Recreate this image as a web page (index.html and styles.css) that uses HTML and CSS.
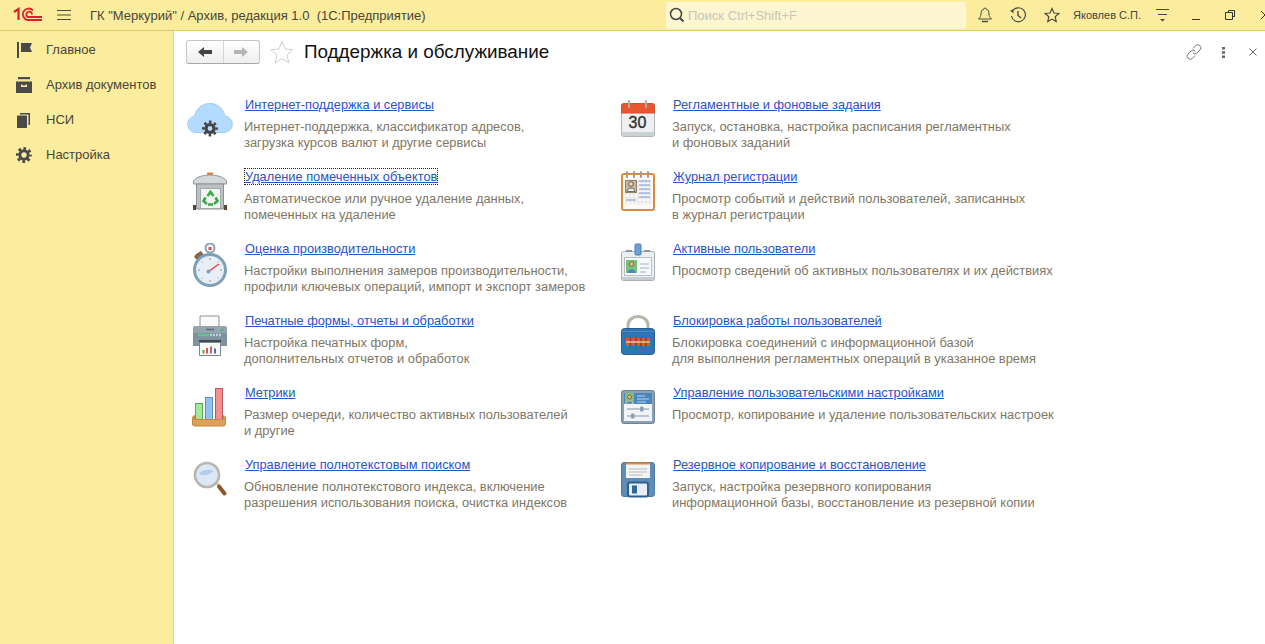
FILE: index.html
```html
<!DOCTYPE html>
<html lang="ru">
<head>
<meta charset="utf-8">
<title>Поддержка и обслуживание</title>
<link rel="stylesheet" href="styles.css">
</head>
<body>
<div class="app">
  <header class="topbar">
    <svg class="logo" width="30" height="16" viewBox="0 0 30 16"><path d="M1 5l4.500-3V13" fill="none" stroke="#d8232a" stroke-width="2.200"/><path d="M20 3.500A5.800 5.800 0 1 0 14.500 13H29" fill="none" stroke="#d8232a" stroke-width="1.800"/><path d="M19 7.500A2.800 2.800 0 1 0 15 10H29" fill="none" stroke="#d8232a" stroke-width="1.800"/></svg>
    <svg class="burger" width="16" height="12" viewBox="0 0 16 12"><path d="M1 1.500h14M1 6h14M1 10.500h14" stroke="#4a4a40" stroke-width="1"/></svg>
    <div class="apptitle">ГК "Меркурий" / Архив, редакция 1.0&nbsp; (1С:Предприятие)</div>
    <div class="search">
      <svg width="18" height="18" viewBox="0 0 18 18"><circle cx="8" cy="8" r="5.500" fill="none" stroke="#444" stroke-width="1.500"/><path d="M12 12l3.500 3.500" stroke="#444" stroke-width="2"/></svg>
      <span>Поиск Ctrl+Shift+F</span>
    </div>
    <div class="tools">
      <svg class="t-bell" width="16" height="18" viewBox="0 0 16 18"><path d="M8 2a1 1 0 0 1 1 1c2.500.6 3 3 3 5 0 2 .6 3 2.500 5h-13C3.400 11 4 10 4 8c0-2 .5-4.400 3-5a1 1 0 0 1 1-1z" fill="none" stroke="#4a4a40"/><path d="M5 15.500h6" stroke="#4a4a40" stroke-width="1.500"/></svg>
      <svg class="t-hist" width="18" height="18" viewBox="0 0 18 18"><path d="M3.500 5A7 7 0 1 1 2.500 10" fill="none" stroke="#4a4a40" stroke-width="1.200"/><path d="M1 4.500l3.500-1v4z" fill="#4a4a40"/><path d="M9 5v4.500l3 2.500" fill="none" stroke="#4a4a40" stroke-width="1.400"/></svg>
      <svg class="t-star" width="16" height="16" viewBox="0 0 16 16"><path d="M8 1.500l2 4.500 4.800.5-3.600 3.200 1 4.800L8 12.100 3.800 14.500l1-4.800L1.200 6.500 6 6z" fill="none" stroke="#4a4a40" stroke-width="1.200"/></svg>
      <span class="user">Яковлев С.П.</span>
      <svg class="t-list" width="15" height="14" viewBox="0 0 15 14"><path d="M1 1.500h13M3 6.500h9" stroke="#4a4a40"/><path d="M5 11h5l-2.500 2.500z" fill="#4a4a40"/></svg>
      <svg class="t-min" width="10" height="12" viewBox="0 0 10 12"><path d="M1 10.500h8" stroke="#333"/></svg>
      <svg class="t-rest" width="10" height="10" viewBox="0 0 10 10"><path d="M3.500 2.500v-2h6v6h-2M.5 2.500h7v7h-7z" fill="none" stroke="#333"/></svg>
      <svg class="t-close" width="10" height="10" viewBox="0 0 10 10"><path d="M1 1l8 8M9 1l-8 8" stroke="#333"/></svg>
    </div>
  </header>
  <div class="body">
    <nav class="sidebar">
      <a class="navitem"><svg width="16" height="16" viewBox="0 0 16 16"><path d="M1 0h2v16H1z" fill="#4a4a4a"/><path d="M5 1h11l-2 4.500 2 4.500H5z" fill="#4a4a4a"/></svg><span>Главное</span></a>
      <a class="navitem"><svg width="16" height="16" viewBox="0 0 16 16"><path d="M2 0h12v2.200H2z" fill="#4a4a4a"/><path fill-rule="evenodd" d="M0 4.500h16V16H0zM5 7.500V10h6V7.500H9.500v1h-3v-1z" fill="#4a4a4a"/></svg><span>Архив документов</span></a>
      <a class="navitem"><svg width="16" height="16" viewBox="0 0 16 16"><path d="M1 3.500h10V16H1z" fill="#4a4a4a"/><path d="M12.500 2.500H4V1h10v12h-1.500z" fill="#4a4a4a"/></svg><span>НСИ</span></a>
      <a class="navitem"><svg width="16" height="16" viewBox="0 0 16 16"><circle cx="8" cy="8" r="4.200" fill="none" stroke="#4a4a4a" stroke-width="3"/><circle cx="8" cy="8" r="6.500" fill="none" stroke="#4a4a4a" stroke-width="3" stroke-dasharray="2.550 2.555" stroke-dashoffset="1.270"/></svg><span>Настройка</span></a>
    </nav>
    <main class="main">
      <div class="titlebar">
        <div class="navbtns">
          <button class="navbtn"><svg width="16" height="12" viewBox="0 0 16 12"><path d="M1 6l6-5v3h8v4H7v3z" fill="#444"/></svg></button>
          <button class="navbtn"><svg width="16" height="12" viewBox="0 0 16 12"><path d="M15 6L9 1v3H1v4h8v3z" fill="#b5b5b5"/></svg></button>
        </div>
        <svg class="favstar" width="24" height="24" viewBox="0 0 24 24"><path d="M12 1.500l3 7.500 8 .7-6 5.300 1.800 7.800L12 18.600l-6.800 4.200L7 15 1 9.700 9 9z" fill="#fff" stroke="#cfcfcf"/></svg>
        <h1 class="title">Поддержка и обслуживание</h1>
        <div class="winact">
          <svg width="16" height="16" viewBox="0 0 16 16"><path d="M7 4.500l2.500-2.800a3 3 0 0 1 4.500 4.300L11 9a3 3 0 0 1-4.200 0M9 11.500l-2.500 2.800A3 3 0 0 1 2 10l3-3a3 3 0 0 1 4.200 0" fill="none" stroke="#777"/></svg>
          <svg width="3" height="11" viewBox="0 0 3 11"><path d="M0 0h3v2.500H0zM0 4.200h3v2.500H0zM0 8.500h3V11H0z" fill="#666"/></svg>
          <svg class="x" width="8" height="8" viewBox="0 0 8 8"><path d="M.5.500l7 7M7.500.500l-7 7" stroke="#666"/></svg>
        </div>
      </div>
      <section class="grid">
        <article class="card">
          <svg class="ico" width="48" height="46" viewBox="0 0 48 46"><path d="M9 33.500a8.200 8.200 0 0 1-1.500-16.300 15.500 15.500 0 0 1 30.500-.2A8.300 8.300 0 0 1 38 33.500z" fill="#b3daff" stroke="#a3cdf2"/><circle cx="23" cy="29.500" r="4" fill="none" stroke="#444" stroke-width="3.200"/><circle cx="23" cy="29.500" r="6.600" fill="none" stroke="#444" stroke-width="2.600" stroke-dasharray="2.590 2.593" stroke-dashoffset="1.300"/></svg>
          <div class="text"><a class="link">Интернет-поддержка и сервисы</a><p>Интернет-поддержка, классификатор адресов,<br>загрузка курсов валют и другие сервисы</p></div>
        </article>
        <article class="card">
          <svg class="ico" width="48" height="46" viewBox="0 0 48 46"><rect x="6.500" y="4.500" width="33" height="33" rx="2" fill="#eef0f2" stroke="#b0b8bc"/><path d="M6.500 14V7a2.500 2.500 0 0 1 2.500-2.500h28A2.500 2.500 0 0 1 39.500 7v7z" fill="#e8572f" stroke="#d0502c"/><path d="M7 33h32v4H7z" fill="#c9d1d5"/><path d="M14 2v6M31 2v6" stroke="#b3aaa5" stroke-width="2.200" stroke-linecap="round"/><text x="22.500" y="29" class="cal">30</text></svg>
          <div class="text"><a class="link">Регламентные и фоновые задания</a><p>Запуск, остановка, настройка расписания регламентных<br>и фоновых заданий</p></div>
        </article>
        <article class="card">
          <svg class="ico" width="48" height="46" viewBox="0 0 48 46"><path d="M20 4V1.500h6V4z" fill="#d9843f"/><path d="M6.500 13V10C9 6 16 4 23 4s14 2 16.500 6v3z" fill="#d3d8da" stroke="#8f9699"/><path d="M9.500 13h27v25h-27z" fill="#bcc1c3" stroke="#8b9194"/><rect x="13.500" y="17.500" width="20" height="20" fill="#f1f4ef" stroke="#a3aaa8"/><path d="M20.500 25l3-4 3 4M28.500 26.500l2 3.500-3.500 3M18.500 26.500l-2 3.500 3.500 3M21 33.500h5" fill="none" stroke="#38a84d" stroke-width="2.600"/><path d="M6 34h3v5H6zM37 34h3v5h-3z" fill="#5c4634"/></svg>
          <div class="text"><a class="link focused">Удаление помеченных объектов</a><p>Автоматическое или ручное удаление данных,<br>помеченных на удаление</p></div>
        </article>
        <article class="card">
          <svg class="ico" width="48" height="46" viewBox="0 0 48 46"><rect x="7" y="3" width="32" height="36" rx="2" fill="#fbfaf6" stroke="#dd8a3f" stroke-width="2"/><path d="M11 8v26M15 8v26M19 8v26M23 8v26M27 8v26M31 8v26M35 8v26M10 11h26M10 15h26M10 19h26M10 23h26M10 27h26M10 31h26" stroke="#dcdfe3" stroke-width=".8"/><rect x="10.500" y="9.500" width="11" height="12" fill="#c9b79d" stroke="#8f8270"/><circle cx="16" cy="13" r="2.300" fill="#f1d9bd" stroke="#444" stroke-width=".8"/><path d="M12 20.500c0-4.500 8-4.500 8 0z" fill="#eee" stroke="#444" stroke-width=".7"/><path d="M24 10h11M24 14h11M24 18h11M24 22h11M24 26h11M11 29h10" stroke="#7996c8"/><path d="M12 1v5M19 1v5M26 1v5M33 1v5" stroke="#9d9d9d" stroke-width="2" stroke-linecap="round"/></svg>
          <div class="text"><a class="link">Журнал регистрации</a><p>Просмотр событий и действий пользователей, записанных<br>в журнал регистрации</p></div>
        </article>
        <article class="card">
          <svg class="ico" width="48" height="46" viewBox="0 0 48 46"><circle cx="23" cy="5" r="4.500" fill="#f4f4f4" stroke="#8fa5b5" stroke-width="2"/><path d="M21.500 4h3v3h-3z" fill="#d85050"/><path d="M9 11l5-3 3 4-7 5-3-3z" fill="#8a6648"/><circle cx="23" cy="27" r="17" fill="#7f9fb5"/><circle cx="23" cy="27" r="14" fill="#e8eef6"/><path d="M23 15v2M23 37v2M11 27h2M33 27h2M14.500 18.500l1 1M31.500 18.500l-1 1M14.500 35.500l1-1M31.500 35.500l-1-1" stroke="#8796a5"/><path d="M21 29l11-8" stroke="#e0454a" stroke-width="1.500"/><circle cx="21.500" cy="28.500" r="2" fill="#7f9fb5"/></svg>
          <div class="text"><a class="link">Оценка производительности</a><p>Настройки выполнения замеров производительности,<br>профили ключевых операций, импорт и экспорт замеров</p></div>
        </article>
        <article class="card">
          <svg class="ico" width="48" height="46" viewBox="0 0 48 46"><rect x="6.500" y="8.500" width="33" height="29" rx="2" fill="#eceff2" stroke="#a7b0b6"/><path d="M7 34h32v3H7z" fill="#c5ccd1"/><path d="M11 8h6M29 8h6" stroke="#8d969c" stroke-width="2"/><rect x="20" y="1" width="6" height="11" rx="1" fill="#6f9fd8" stroke="#4d7fb8"/><rect x="9.500" y="14.500" width="27" height="18" fill="#f6f8fa" stroke="#b7c0c6"/><rect x="11" y="17" width="11" height="13" fill="#7dc07a"/><circle cx="16.500" cy="21" r="2.300" fill="#e8b98c" stroke="#6b4a2f" stroke-width=".7"/><path d="M12.500 30c0-5 8-5 8 0z" fill="#4f86c6"/><path d="M25 21h9M25 25h9M25 29h6" stroke="#9db3c6" stroke-width="1.200"/></svg>
          <div class="text"><a class="link">Активные пользователи</a><p>Просмотр сведений об активных пользователях и их действиях</p></div>
        </article>
        <article class="card">
          <svg class="ico" width="48" height="46" viewBox="0 0 48 46"><path d="M13 1h19v13H13z" fill="#fafafa" stroke="#8d9398"/><path d="M6 14a3 3 0 0 1 3-3h28a3 3 0 0 1 3 3v17H6z" fill="#7f929f"/><path d="M6 14a3 3 0 0 1 3-3h28a3 3 0 0 1 3 3v4H6z" fill="#94a5b0"/><path d="M19 14.500h8" stroke="#5c6a73" stroke-width="1.500"/><circle cx="35" cy="15" r="1.500" fill="#5aab82"/><path d="M11 20h11" stroke="#62c48f" stroke-width="2.400"/><path d="M23 20h12" stroke="#c2cdd3" stroke-width="2.400" stroke-dasharray="2 1"/><path d="M12 25h22v6H12z" fill="#3f4a52"/><path d="M12.500 27.500h21v13h-21z" fill="#fbfbfb" stroke="#7a8890"/><path d="M16.500 35v3.500" stroke="#4fa35a" stroke-width="2"/><path d="M20 33v5.500" stroke="#e05050" stroke-width="2"/><path d="M24 31.500v7" stroke="#d86060" stroke-width="2"/><path d="M28 33.500v5" stroke="#4a6bc4" stroke-width="2"/></svg>
          <div class="text"><a class="link">Печатные формы, отчеты и обработки</a><p>Настройка печатных форм,<br>дополнительных отчетов и обработок</p></div>
        </article>
        <article class="card">
          <svg class="ico" width="48" height="46" viewBox="0 0 48 46"><path d="M13 15V10A10 8.500 0 0 1 33 10v5" fill="none" stroke="#b9b4aa" stroke-width="3"/><rect x="6.500" y="13.500" width="33" height="26" rx="3" fill="#2f74b5" stroke="#24608f"/><path d="M7 16.500h32" stroke="#4a8bc8"/><rect x="11" y="23" width="24" height="8" fill="#d85a30"/><path d="M15.500 23v8M21 23v8M26 23v8M31 23v8" stroke="#6b3a28" stroke-width="1.200"/><path d="M11 27h24" stroke="#f5c08a" stroke-width="1.500"/></svg>
          <div class="text"><a class="link">Блокировка работы пользователей</a><p>Блокировка соединений с информационной базой<br>для выполнения регламентных операций в указанное время</p></div>
        </article>
        <article class="card">
          <svg class="ico" width="48" height="46" viewBox="0 0 48 46"><rect x="8.500" y="16.500" width="7" height="16" fill="#a3e89a" stroke="#5fa558"/><rect x="18.500" y="10.500" width="7" height="22" fill="#94c0f0" stroke="#5f8fc8"/><rect x="28.500" y="1.500" width="7" height="31" fill="#f59090" stroke="#b85a60"/><path d="M5.500 30l2-1.500v4h29v-4l2 1.500v7a2 2 0 0 1-2 2h-29a2 2 0 0 1-2-2z" fill="#dfa05a" stroke="#c4873f"/></svg>
          <div class="text"><a class="link">Метрики</a><p>Размер очереди, количество активных пользователей<br>и другие</p></div>
        </article>
        <article class="card">
          <svg class="ico" width="48" height="46" viewBox="0 0 48 46"><rect x="6.500" y="3.500" width="33" height="33" rx="2" fill="#8ba1b3" stroke="#6f8698"/><path d="M9 6h28v11H9z" fill="#4a86bf"/><rect x="10" y="6" width="9" height="11" fill="#86c06d"/><circle cx="14.500" cy="10" r="2" fill="#e3b58d" stroke="#4a3a2a" stroke-width=".6"/><path d="M11 17c0-4 7-4 7 0z" fill="#5b7fa5" stroke="#e8eef4" stroke-width=".5"/><path d="M22 9h8M22 12h12M22 15h9" stroke="#bcd6ec"/><path d="M9 17h28v17H9z" fill="#f2f5f8"/><path d="M12 22h22M12 29h22" stroke="#8295a5"/><rect x="25" y="19.500" width="3.500" height="5" rx="1" fill="#8ba1b3"/><rect x="16" y="26.500" width="3.500" height="5" rx="1" fill="#8ba1b3"/></svg>
          <div class="text"><a class="link">Управление пользовательскими настройками</a><p>Просмотр, копирование и удаление пользовательских настроек</p></div>
        </article>
        <article class="card">
          <svg class="ico" width="48" height="46" viewBox="0 0 48 46"><circle cx="20" cy="16" r="12" fill="#dce8f6" stroke="#b9b6ae" stroke-width="2.600"/><path d="M12 15c3-5 10-5 15-3-4 3-10 6-15 3z" fill="#b5cdef"/><path d="M28.500 25l2.500-1 2 1-1.500 2.500z" fill="#c8c0b4"/><path d="M32 27.500l5.500 7" stroke="#8a5a2c" stroke-width="4" stroke-linecap="round"/></svg>
          <div class="text"><a class="link">Управление полнотекстовым поиском</a><p>Обновление полнотекстового индекса, включение<br>разрешения использования поиска, очистка индексов</p></div>
        </article>
        <article class="card">
          <svg class="ico" width="48" height="46" viewBox="0 0 48 46"><path d="M9 3.500h28a2.500 2.500 0 0 1 2.500 2.500v29a2.500 2.500 0 0 1-2.500 2.500H9A2.500 2.500 0 0 1 6.500 35V6A2.500 2.500 0 0 1 9 3.500z" fill="#5f8db8" stroke="#4c7aa5"/><rect x="11" y="4" width="24" height="15" fill="#f3f4f4"/><path d="M11 4.500h24" stroke="#e58a3c" stroke-width="2"/><path d="M14 10h18M14 13h18M14 16h14" stroke="#b6bcc0"/><rect x="13" y="23.500" width="20" height="14" rx="2" fill="#e7eef4" stroke="#2f5f8a" stroke-width="2"/><rect x="17" y="26.500" width="5" height="8" fill="#2f6a9a"/></svg>
          <div class="text"><a class="link">Резервное копирование и восстановление</a><p>Запуск, настройка резервного копирования<br>информационной базы, восстановление из резервной копии</p></div>
        </article>
      </section>
    </main>
  </div>
</div>
</body>
</html>
```

FILE: styles.css
```css
* { box-sizing: border-box; }
html, body { margin: 0; height: 100%; }
body { font-family: "Liberation Sans", Arial, sans-serif; font-size: 12.800px; color: #333; background: #fff; overflow: hidden; }
.app { height: 644px; display: flex; flex-direction: column; }
.topbar { height: 31px; flex: none; display: flex; align-items: center; background: #fbec9e; border-bottom: 1px solid #dcc96b; padding-left: 13px; overflow: hidden; }
.topbar svg { flex: none; }
.logo { margin-right: 13px; }
.burger { margin-right: 18px; }
.apptitle { width: 576px; flex: none; font-size: 13px; color: #4a4638; }
.search { width: 300px; height: 27px; flex: none; background: #fdf6d0; border-radius: 2px; display: flex; align-items: center; padding-left: 2px; gap: 2px; font-size: 13px; color: #c9c6b8; }
.tools { flex: none; height: 30px; display: flex; align-items: center; }
.t-bell { margin-left: 11px; }
.t-hist { margin-left: 16px; }
.t-star { margin-left: 17px; }
.user { margin-left: 13px; font-size: 11px; color: #444; white-space: nowrap; }
.t-list { margin-left: 14px; }
.t-min { margin-left: 21px; }
.t-rest { margin-left: 24px; }
.t-close { margin-left: 25px; }
.body { flex: 1; display: flex; min-height: 0; }
.sidebar { width: 174px; flex: none; background: #fbec9e; border-right: 1px solid #e2d27e; padding-top: 1px; }
.navitem { height: 35px; display: flex; align-items: center; padding-left: 16px; gap: 14px; font-size: 13px; color: #4a4638; }
.main { flex: 1; min-width: 0; padding: 0 8px 0 12px; }
.titlebar { height: 42px; display: flex; align-items: center; }
.navbtns { display: flex; width: 74px; height: 24px; border: 1px solid #c6c6c6; border-bottom-color: #a8a8a8; border-radius: 3px; background: linear-gradient(#fff, #eee); }
.navbtn { flex: 1; border: 0; background: none; padding: 0; display: flex; align-items: center; justify-content: center; }
.navbtn + .navbtn { border-left: 1px solid #d6d6d6; }
.favstar { margin-left: 10px; }
.title { margin: 0 0 0 10px; font-size: 18.850px; font-weight: 400; color: #111; flex: 1; }
.winact { display: flex; align-items: center; gap: 20px; }
.x { margin-left: 4px; }
.grid { display: grid; grid-template-columns: 428px 1fr; grid-auto-rows: 72px; padding: 22px 0 0 1px; }
.card { display: flex; }
.ico { flex: none; margin: 4px 9px 0 0; }
.text { padding-top: 2px; }
.link { color: #2058c6; text-decoration: underline; margin-left: 1px; }
.focused { outline: 1px dotted #222; }
.text p { margin: 7px 0 0; line-height: 16px; font-size: 12.880px; color: #7f7764; }
.cal { font-size: 16px; text-anchor: middle; fill: #333; stroke: #333; stroke-width: .4px; font-family: "Liberation Sans", sans-serif; }
```
